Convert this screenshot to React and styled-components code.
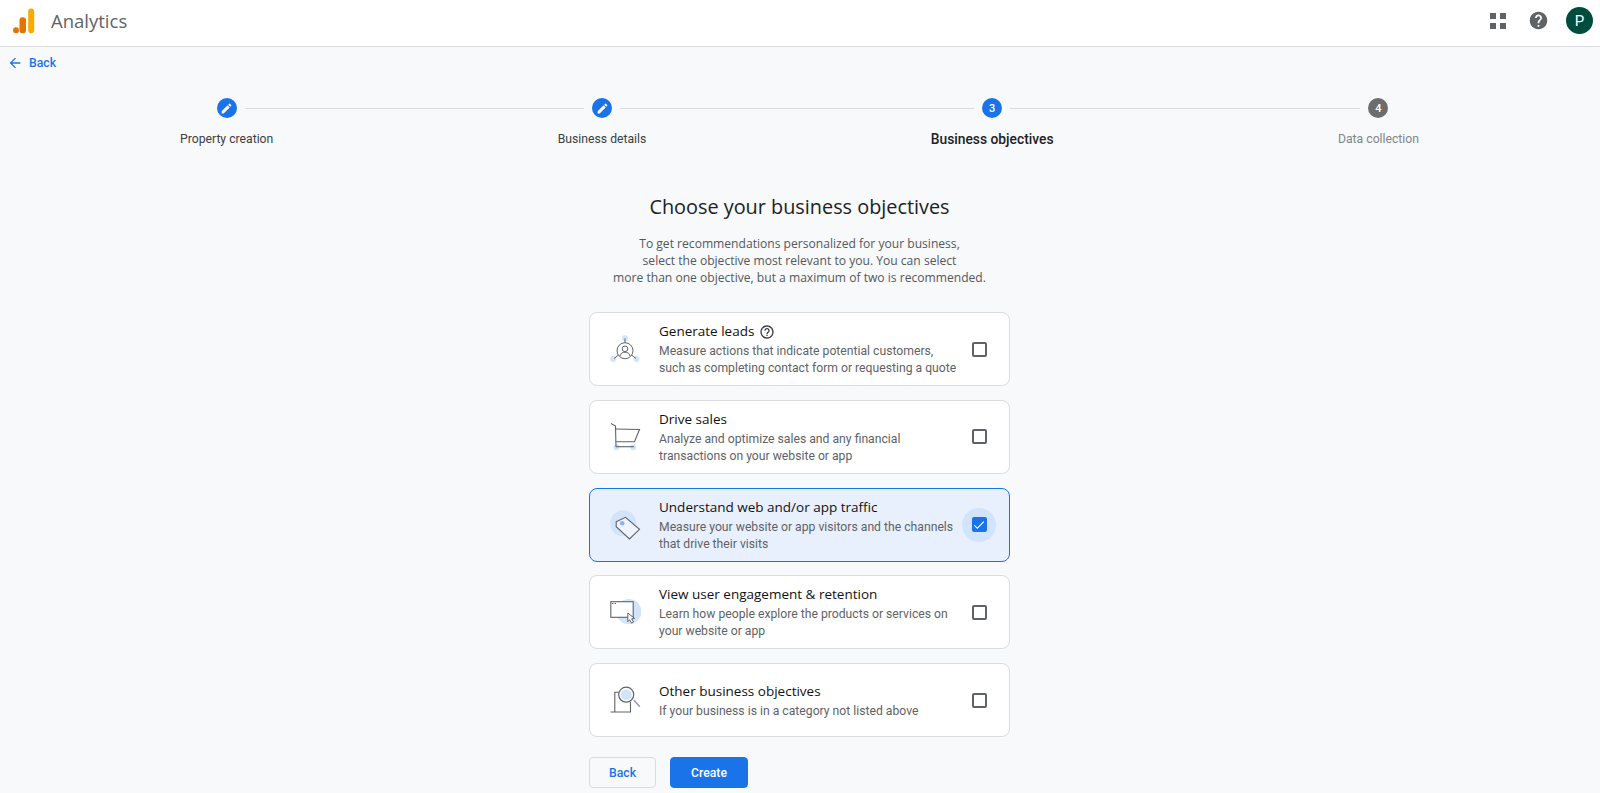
import styled, { createGlobalStyle } from 'styled-components';
import { MdArrowBack, MdEdit, MdHelp, MdHelpOutline, MdCheck } from 'react-icons/md';

const GlobalStyle = createGlobalStyle`
	html, body {
		margin: 0;
		height: 100%;
		overflow: hidden;
		background: #f8f9fa;
		font-family: Roboto, "Liberation Sans", sans-serif;
	}
`;

const Page = styled.div`
	height: 793px;
	overflow: hidden;
	background: #f8f9fa;
`;

const TopBar = styled.header`
	height: 41px;
	background: #fff;
	border-bottom: 1px solid #dadce0;
	display: flex;
	align-items: center;
	padding: 0 7px 5px 12px;
`;

const Brand = styled.div`
	display: flex;
	align-items: center;
	gap: 15px;
	flex: 1;
`;

const BrandName = styled.span`
	font-size: 18.5px;
	color: #5f6368;
	font-family: "Open Sans", sans-serif;
`;

const TopIcons = styled.div`
	display: flex;
	align-items: center;
	color: #5f6368;
`;

const AppsGrid = styled.div`
	display: grid;
	grid-template-columns: 6px 6px;
	grid-auto-rows: 6px;
	gap: 4px;
	margin-right: 22px;
`;

const AppsCell = styled.span`
	background: #5f6368;
`;

const HelpIcon = styled(MdHelp)`
	font-size: 21px;
	margin-right: 17px;
`;

const Avatar = styled.div`
	width: 27px;
	height: 27px;
	border-radius: 50%;
	background: #004d40;
	color: #fff;
	font-size: 15px;
	display: flex;
	align-items: center;
	justify-content: center;
`;

const BackRow = styled.div`
	height: 30px;
`;

const BackLink = styled.a`
	display: inline-flex;
	align-items: center;
	gap: 6px;
	height: 32px;
	padding-left: 7px;
	color: #1a73e8;
	font-size: 12.2px;
	font-weight: 500;
`;

const Stepper = styled.div`
	display: flex;
	padding: 21px 181px 0 180px;
`;

const Step = styled.div`
	display: flex;
	flex-direction: column;
	align-items: center;
	flex: none;
`;

const StepDot = styled.div`
	width: 20px;
	height: 20px;
	border-radius: 50%;
	background: ${({ $off }) => ($off ? '#6d6d6d' : '#1a73e8')};
	color: #fff;
	font-size: 11px;
	font-weight: 500;
	display: flex;
	align-items: center;
	justify-content: center;
`;

const StepLabel = styled.div`
	margin-top: 11px;
	line-height: 20px;
	white-space: nowrap;
	font-size: ${({ $active }) => ($active ? '13.8px' : '12.2px')};
	font-weight: ${({ $active }) => ($active ? 500 : 400)};
	color: ${({ $active, $off }) => ($active ? '#202124' : $off ? '#80868b' : '#3c4043')};
`;

const StepGap = styled.div`
	flex: 1;
	min-width: 0;
`;

const StepLine = styled.div`
	height: 1px;
	margin-top: 10px;
	background: #dadce0;
	margin-left: ${({ $left }) => $left}px;
	margin-right: ${({ $right }) => $right}px;
`;

const Main = styled.main`
	width: 421px;
	margin-left: 589px;
	display: flex;
	flex-direction: column;
`;

const Title = styled.h1`
	margin: 42px -40px 0;
	font-size: 19.85px;
	font-weight: 400;
	line-height: 32px;
	text-align: center;
	color: #202124;
	font-family: "Open Sans", sans-serif;
`;

const Intro = styled.p`
	margin: 12px -40px 0;
	font-size: 12.1px;
	font-weight: 500;
	line-height: 17px;
	text-align: center;
	color: #54585d;
	font-family: "Open Sans", sans-serif;
`;

const CardList = styled.div`
	margin-top: 26px;
	display: flex;
	flex-direction: column;
	gap: 13.75px;
`;

const Card = styled.div`
	box-sizing: border-box;
	height: 74px;
	display: flex;
	align-items: center;
	border-radius: 8px;
	border: 1px solid ${({ $on }) => ($on ? '#1a73e8' : '#dadce0')};
	background: ${({ $on }) => ($on ? '#e8f0fe' : '#fff')};
`;

const CardArt = styled.div`
	width: 69px;
	flex: none;
	display: flex;
	justify-content: center;
	svg { display: block; }
`;

const CardBody = styled.div`
	flex: 1;
	min-width: 0;
	padding-top: 2px;
`;

const CardTitle = styled.div`
	display: flex;
	align-items: center;
	gap: 5px;
	margin-bottom: 3px;
	font-size: 13.5px;
	font-weight: 500;
	line-height: 17px;
	color: #111;
	font-family: "Open Sans", sans-serif;
`;

const CardText = styled.div`
	font-size: 12.2px;
	line-height: 17px;
	white-space: nowrap;
	color: #5f6368;
`;

const CheckWrap = styled.div`
	width: 34px;
	height: 34px;
	margin-right: 13px;
	flex: none;
	border-radius: 50%;
	background: ${({ $on }) => ($on ? '#d2e3fc' : 'transparent')};
	display: flex;
	align-items: center;
	justify-content: center;
`;

const CheckBox = styled.div`
	box-sizing: border-box;
	width: 15px;
	height: 15px;
	border-radius: 2px;
	border: ${({ $on }) => ($on ? 'none' : '2px solid #5f6368')};
	background: ${({ $on }) => ($on ? '#1a73e8' : 'transparent')};
	color: #fff;
	display: flex;
	align-items: center;
	justify-content: center;
	font-size: 14px;
`;

const Actions = styled.div`
	margin-top: 20px;
	display: flex;
	gap: 14px;
`;

const Button = styled.button`
	box-sizing: border-box;
	height: 31px;
	width: ${({ $w }) => $w}px;
	border-radius: 4px;
	font-family: Roboto, sans-serif;
	font-size: 12.2px;
	font-weight: 500;
	border: 1px solid ${({ $primary }) => ($primary ? '#1a73e8' : '#dadce0')};
	background: ${({ $primary }) => ($primary ? '#1a73e8' : 'transparent')};
	color: ${({ $primary }) => ($primary ? '#fff' : '#1a73e8')};
`;

const HintIcon = styled(MdHelpOutline)`
	font-size: 16px;
	color: #3c4043;
`;

const Logo = () => (
	<svg width='24' height='26' viewBox='0 0 24 26'>
		<circle cx='4' cy='22.2' r='3' fill='#e37400' />
		<rect x='7.5' y='9.2' width='6.5' height='16' rx='3' fill='#e37400' />
		<rect x='16.2' y='0.5' width='6' height='24.7' rx='3' fill='#f9ab00' />
	</svg>
);

const LeadsArt = () => (
	<svg width='32' height='32' viewBox='0 0 32 32' fill='none' stroke='#5f6368' strokeWidth='1'>
		<circle cx='16' cy='5.3' r='3' fill='#d2e3fc' stroke='none' />
		<circle cx='4.2' cy='26' r='3' fill='#d2e3fc' stroke='none' />
		<circle cx='27.5' cy='26' r='3' fill='#d2e3fc' stroke='none' />
		<circle cx='16' cy='17.7' r='8' />
		<circle cx='16' cy='15.8' r='2.8' />
		<path d='M11 23c.8-3 2.5-3.8 5-3.8s4.2.8 5 3.8' />
		<path d='M16 5.500v4.200M5 25.500l4.500-3.500M27 25.500l-4.500-3.500' />
	</svg>
);

const CartArt = () => (
	<svg width='32' height='34' viewBox='0 0 32 34' fill='none' stroke='#5f6368' strokeWidth='1.1'>
		<circle cx='7.5' cy='27.300' r='3' fill='#d2e3fc' stroke='none' />
		<circle cx='24.200' cy='27.300' r='3' fill='#d2e3fc' stroke='none' />
		<path d='M2 3.500L6.500 6l.5 21' />
		<path d='M6.500 9l24 .5-5 12.200H6.700' />
		<path d='M7 26.700h18' />
	</svg>
);

const TagArt = () => (
	<svg width='32' height='32' viewBox='0 0 32 32' fill='none'>
		<circle cx='14.200' cy='14.300' r='13' fill='#d2e3fc' />
		<path d='M7.200 12.700L16.500 8.300l14 12-10 9.700L7.200 17.700z' fill='#eef3fd' stroke='#5f6368' strokeWidth='1.100' />
		<circle cx='13.200' cy='14.300' r='2.300' fill='#8ab4f8' />
	</svg>
);

const WindowArt = () => (
	<svg width='32' height='32' viewBox='0 0 32 32' fill='none'>
		<circle cx='19.800' cy='15.700' r='12.600' fill='#d2e3fc' />
		<rect x='1.800' y='5.700' width='22.400' height='15.600' fill='#fff' stroke='#5f6368' strokeWidth='1.100' />
		<path d='M3 7.500h1.500M5.500 7.500h1.500' stroke='#5f6368' />
		<path d='M18.800 17l6.800 5.400-3 .4 2 3.200-2 1.100-2-3.400-1.800 2z' fill='#fff' stroke='#5f6368' strokeWidth='1' />
	</svg>
);

const SearchArt = () => (
	<svg width='32' height='32' viewBox='0 0 32 32' fill='none'>
		<path d='M9.500 8.300H5.800v20M1.500 28h20V18' stroke='#5f6368' strokeWidth='1.100' />
		<circle cx='17.200' cy='10.700' r='7.500' fill='#fff' stroke='#5f6368' strokeWidth='1.200' />
		<circle cx='17.200' cy='10.700' r='5.500' fill='#d2e3fc' />
		<path d='M24.800 16l6 6.700' stroke='#8d9db3' strokeWidth='1.500' />
	</svg>
);

const objectives = [
	{ title: 'Generate leads', hint: true, art: <LeadsArt />, lines: ['Measure actions that indicate potential customers,', 'such as completing contact form or requesting a quote'] },
	{ title: 'Drive sales', art: <CartArt />, lines: ['Analyze and optimize sales and any financial', 'transactions on your website or app'] },
	{ title: 'Understand web and/or app traffic', on: true, art: <TagArt />, lines: ['Measure your website or app visitors and the channels', 'that drive their visits'] },
	{ title: 'View user engagement & retention', art: <WindowArt />, lines: ['Learn how people explore the products or services on', 'your website or app'] },
	{ title: 'Other business objectives', art: <SearchArt />, lines: ['If your business is in a category not listed above'] },
];

const App = () => {
	return (
		<Page>
			<GlobalStyle />
			<TopBar>
				<Brand>
					<Logo />
					<BrandName>Analytics</BrandName>
				</Brand>
				<TopIcons>
					<AppsGrid>
						<AppsCell />
						<AppsCell />
						<AppsCell />
						<AppsCell />
					</AppsGrid>
					<HelpIcon />
					<Avatar>P</Avatar>
				</TopIcons>
			</TopBar>
			<BackRow>
				<BackLink>
					<MdArrowBack size={16} /> Back
				</BackLink>
			</BackRow>
			<Stepper>
				<Step>
					<StepDot><MdEdit size={13} /></StepDot>
					<StepLabel>Property creation</StepLabel>
				</Step>
				<StepGap><StepLine $left={-28.5} $right={-26.5} /></StepGap>
				<Step>
					<StepDot><MdEdit size={13} /></StepDot>
					<StepLabel>Business details</StepLabel>
				</Step>
				<StepGap><StepLine $left={-26.5} $right={-43.5} /></StepGap>
				<Step>
					<StepDot>3</StepDot>
					<StepLabel $active>Business objectives</StepLabel>
				</Step>
				<StepGap><StepLine $left={-43.5} $right={-22.5} /></StepGap>
				<Step>
					<StepDot $off>4</StepDot>
					<StepLabel $off>Data collection</StepLabel>
				</Step>
			</Stepper>
			<Main>
				<Title>Choose your business objectives</Title>
				<Intro>
					To get recommendations personalized for your business,
					<br />
					select the objective most relevant to you. You can select
					<br />
					more than one objective, but a maximum of two is recommended.
				</Intro>
				<CardList>
					{objectives.map((item) => (
						<Card key={item.title} $on={item.on}>
							<CardArt>{item.art}</CardArt>
							<CardBody>
								<CardTitle>
									{item.title}
									{item.hint && <HintIcon />}
								</CardTitle>
								{item.lines.map((line) => (
									<CardText key={line}>{line}</CardText>
								))}
							</CardBody>
							<CheckWrap $on={item.on}>
								<CheckBox $on={item.on}>{item.on && <MdCheck />}</CheckBox>
							</CheckWrap>
						</Card>
					))}
				</CardList>
				<Actions>
					<Button $w={67}>Back</Button>
					<Button $w={78} $primary>Create</Button>
				</Actions>
			</Main>
		</Page>
	);
};

export default App;
